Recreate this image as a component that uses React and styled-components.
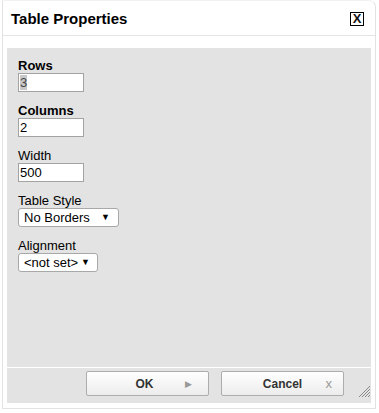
import React from "react";
import styled, { createGlobalStyle } from "styled-components";

const Global = createGlobalStyle`
  html, body { margin: 0; padding: 0; background: #fff; }
  body { font-family: "Liberation Sans", Arial, sans-serif; }
`;

const Dialog = styled.div`
  box-sizing: border-box;
  margin-left: 2px;
  width: 374px;
  height: 409px;
  background: #fff;
  border: 1px solid #e2e2e2;
  border-top-color: #f2f2f2;
  border-radius: 0 7px 0 0;
  display: flex;
  flex-direction: column;
`;

const Header = styled.div`
  height: 34px;
  border-bottom: 1px solid #e4e4e4;
  display: flex;
  align-items: center;
  justify-content: space-between;
  padding: 0 11px 0 8px;
`;

const Title = styled.h1`
  margin: 0;
  font: bold 15px/17px "Liberation Sans", Arial, sans-serif;
  color: #000;
`;

const CloseBox = styled.button`
  box-sizing: border-box;
  width: 14px;
  height: 14px;
  margin-top: 2px;
  padding: 0;
  border: 1px solid #000;
  background: #fff;
  font: bold 13px/12px "Liberation Sans", Arial, sans-serif;
  color: #111;
  display: flex;
  align-items: center;
  justify-content: center;
`;

const Panel = styled.div`
  position: relative;
  margin: 12px 4px 5px 4px;
  flex: 1;
  background: #e3e3e3;
  display: flex;
  flex-direction: column;
`;

const Content = styled.div`
  height: 320px;
  box-sizing: border-box;
  padding: 10px 11px 0 11px;
  border-bottom: 1px solid #fff;
  display: flex;
  flex-direction: column;
  gap: 11px;
`;

const Field = styled.div`
  display: flex;
  flex-direction: column;
  align-items: flex-start;
`;

const Label = styled.label`
  font: ${(p) => (p.$bold ? "bold" : "normal")} 13px/15px "Liberation Sans", Arial, sans-serif;
  color: #000;
`;

const TextBox = styled.div`
  box-sizing: border-box;
  width: 66px;
  height: 19px;
  border: 1px solid #a3a3a3;
  background: #fff;
  padding: 0 1px;
  font: 13px/17px "Liberation Sans", Arial, sans-serif;
  color: ${(p) => (p.$muted ? "#444" : "#000")};
`;

const Selected = styled.span`
  background: #c8c8c8;
`;

const SelectBox = styled.div`
  box-sizing: border-box;
  width: ${(p) => p.$w}px;
  height: 19px;
  border: 1px solid #a8a8a8;
  border-radius: 3px;
  background: #fff;
  padding: 0 ${(p) => p.$pr}px 0 5px;
  display: flex;
  align-items: center;
  justify-content: space-between;
  font: 13px/17px "Liberation Sans", Arial, sans-serif;
  color: #000;
`;

const Arrow = styled.span`
  font-size: 9px;
  line-height: 9px;
  color: #000;
`;

const Footer = styled.div`
  flex: 1;
  display: flex;
  justify-content: flex-end;
  align-items: flex-start;
  gap: 12px;
  padding: 3px 27px 0 0;
`;

const Button = styled.button`
  box-sizing: border-box;
  width: 123px;
  height: 25px;
  padding: 0;
  border: 1px solid #adadad;
  border-radius: 2px;
  background: linear-gradient(#ffffff, #ececec);
  display: grid;
  grid-template-columns: 1fr auto 1fr;
  align-items: center;
  font: bold 12px/14px "Liberation Sans", Arial, sans-serif;
  color: #333;
`;

const ButtonText = styled.span`
  grid-column: 2;
  margin-left: ${(p) => p.$shift || 0}px;
  padding-top: 1px;
`;

const ButtonIcon = styled.span`
  grid-column: 3;
  justify-self: end;
  margin-right: ${(p) => p.$mr}px;
  color: #999;
  font: ${(p) => p.$size}px/10px "Liberation Sans", Arial, sans-serif;
  font-weight: normal;
`;

const Grip = styled.svg`
  position: absolute;
  right: 1px;
  bottom: 6px;
`;

export default function App() {
  return (
    <>
      <Global />
      <Dialog>
        <Header>
          <Title>Table Properties</Title>
          <CloseBox>X</CloseBox>
        </Header>
        <Panel>
          <Content>
            <Field>
              <Label $bold>Rows</Label>
              <TextBox $muted>
                <Selected>3</Selected>
              </TextBox>
            </Field>
            <Field>
              <Label $bold>Columns</Label>
              <TextBox>2</TextBox>
            </Field>
            <Field>
              <Label>Width</Label>
              <TextBox>500</TextBox>
            </Field>
            <Field>
              <Label>Table Style</Label>
              <SelectBox $w={101} $pr={8}>
                <span>No Borders</span>
                <Arrow>▼</Arrow>
              </SelectBox>
            </Field>
            <Field>
              <Label>Alignment</Label>
              <SelectBox $w={80} $pr={7}>
                <span>&lt;not set&gt;</span>
                <Arrow>▼</Arrow>
              </SelectBox>
            </Field>
          </Content>
          <Footer>
            <Button>
              <ButtonText $shift={-6}>OK</ButtonText>
              <ButtonIcon $mr={16} $size={9}>▶</ButtonIcon>
            </Button>
            <Button>
              <ButtonText>Cancel</ButtonText>
              <ButtonIcon $mr={11} $size={13}>x</ButtonIcon>
            </Button>
          </Footer>
          <Grip width="12" height="12" viewBox="0 0 12 12">
            <g stroke="#888" strokeWidth="1">
              <line x1="12" y1="1" x2="1" y2="12" />
              <line x1="12" y1="4" x2="4" y2="12" />
              <line x1="12" y1="7" x2="7" y2="12" />
              <line x1="12" y1="10" x2="10" y2="12" />
            </g>
          </Grip>
        </Panel>
      </Dialog>
    </>
  );
}
